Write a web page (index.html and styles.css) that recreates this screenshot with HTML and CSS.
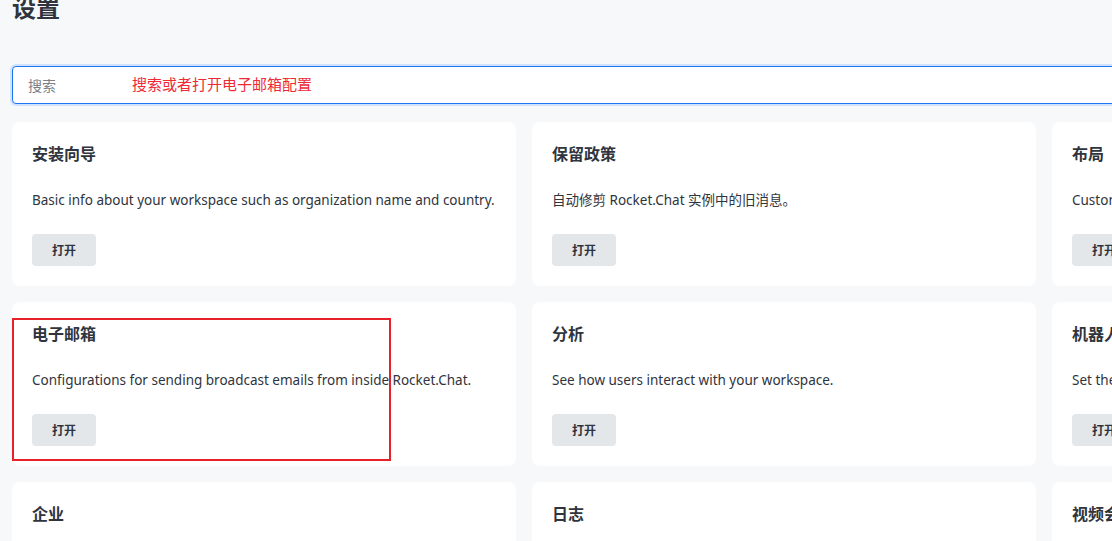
FILE: index.html
```html
<!DOCTYPE html>
<html lang="zh-CN">
<head>
  <meta charset="UTF-8">
  <title>设置</title>
  <link rel="stylesheet" href="styles.css">
</head>
<body>

<div class="page">
  <h1 class="page-title">设置</h1>

  <div class="search-box">
    <input class="search-input" type="text" placeholder="搜索" />
    <span class="search-note">搜索或者打开电子邮箱配置</span>
  </div>

  <div class="card-grid">
    <div class="card">
      <h3>安装向导</h3>
      <p>Basic info about your workspace such as organization name and country.</p>
      <button>打开</button>
    </div>
    <div class="card">
      <h3>保留政策</h3>
      <p>自动修剪 Rocket.Chat 实例中的旧消息。</p>
      <button>打开</button>
    </div>
    <div class="card">
      <h3>布局</h3>
      <p>Customize the look and feel of your workspace.</p>
      <button>打开</button>
    </div>

    <div class="card marked">
      <h3>电子邮箱</h3>
      <p>Configurations for sending broadcast emails from inside Rocket.Chat.</p>
      <button>打开</button>
      <!-- 标注框 -->
      <div class="mark-box"></div>
    </div>
    <div class="card">
      <h3>分析</h3>
      <p>See how users interact with your workspace.</p>
      <button>打开</button>
    </div>
    <div class="card">
      <h3>机器人</h3>
      <p>Set the bot account settings.</p>
      <button>打开</button>
    </div>

    <div class="card">
      <h3>企业</h3>
      <p>Enterprise settings.</p>
      <button>打开</button>
    </div>
    <div class="card">
      <h3>日志</h3>
      <p>Server log settings.</p>
      <button>打开</button>
    </div>
    <div class="card">
      <h3>视频会议</h3>
      <p>Video conference settings.</p>
      <button>打开</button>
    </div>
  </div>
</div>

</body>
</html>
```

FILE: styles.css
```css
html, body {
  margin: 0;
  height: 100%;
  overflow: hidden;
}

body {
  font-family: "Noto Sans", "Noto Sans CJK SC", sans-serif;
  background: #f7f8fa;
  color: #2f343d;
}

.page {
  width: 1544px;
  padding: 0 12px;
}

.page-title {
  margin: -8px 0 0 0;
  font-size: 24px;
  line-height: 32px;
  font-weight: bold;
  color: #2f343d;
}

/* search */
.search-box {
  position: relative;
  margin-top: 42px;
}

.search-input {
  box-sizing: border-box;
  width: 100%;
  height: 38px;
  padding: 0 15px;
  font-family: inherit;
  font-size: 14px;
  color: #2f343d;
  background: #fff;
  border: 1px solid #1d74f5;
  border-radius: 4px;
  box-shadow: 0 0 0 2px #d1e3fd;
  outline: none;
}

.search-input::placeholder {
  color: #7c8088;
}

.search-note {
  position: absolute;
  left: 120px;
  top: 8px;
  font-size: 15px;
  line-height: 20px;
  color: #ee2a36;
}

/* cards */
.card-grid {
  display: grid;
  grid-template-columns: repeat(3, 504px);
  gap: 16px;
  margin-top: 18px;
}

.card {
  position: relative;
  background: #fff;
  border-radius: 8px;
  padding: 20px;
  height: 124px;
}

.card h3 {
  margin: 0;
  font-size: 16px;
  line-height: 24px;
  font-weight: bold;
}

.card p {
  margin: 24px 0 0 0;
  font-size: 13.5px;
  line-height: 20px;
  white-space: nowrap;
}

.card button {
  margin-top: 24px;
  width: 64px;
  height: 32px;
  font-family: inherit;
  font-size: 12px;
  font-weight: bold;
  color: #2f343d;
  background: #e4e7ea;
  border: none;
  border-radius: 4px;
  cursor: pointer;
}

.mark-box {
  position: absolute;
  left: 0;
  top: 16px;
  width: 375px;
  height: 139px;
  border: 2px solid #e8202a;
}
```
